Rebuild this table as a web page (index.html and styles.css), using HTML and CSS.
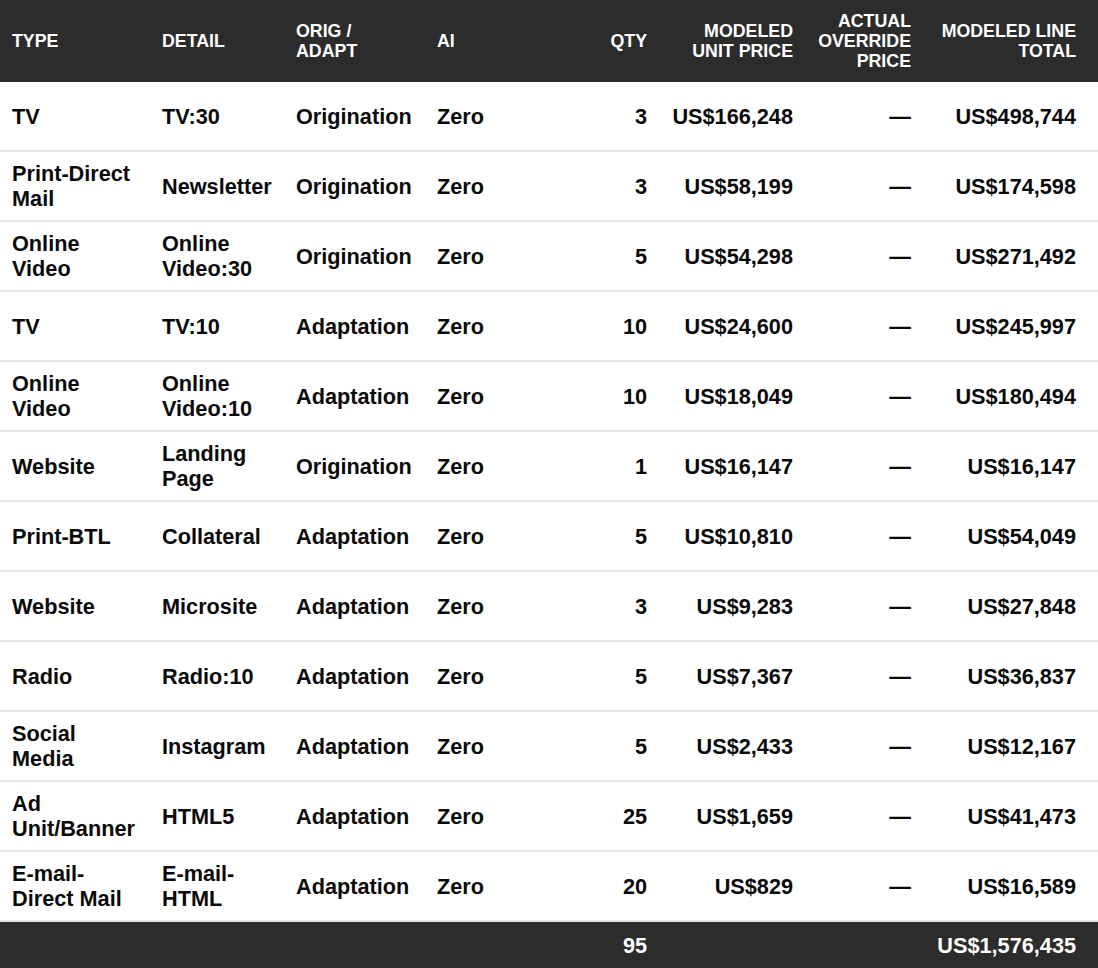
FILE: index.html
```html
<!DOCTYPE html>
<html lang="en">
<head>
<meta charset="utf-8">
<title>Line Items</title>
<link rel="stylesheet" href="styles.css">
</head>
<body>
<div class="sheet">
  <div class="row head">
    <div class="c">TYPE</div>
    <div class="c">DETAIL</div>
    <div class="c">ORIG / ADAPT</div>
    <div class="c">AI</div>
    <div class="c r">QTY</div>
    <div class="c r">MODELED UNIT PRICE</div>
    <div class="c r">ACTUAL OVERRIDE PRICE</div>
    <div class="c r last">MODELED LINE TOTAL</div>
  </div>

  <div class="row body"><div class="c">TV</div><div class="c">TV:30</div><div class="c">Origination</div><div class="c">Zero</div><div class="c r">3</div><div class="c r">US$166,248</div><div class="c r">—</div><div class="c r last">US$498,744</div></div>
  <div class="row body"><div class="c">Print-Direct Mail</div><div class="c">Newsletter</div><div class="c">Origination</div><div class="c">Zero</div><div class="c r">3</div><div class="c r">US$58,199</div><div class="c r">—</div><div class="c r last">US$174,598</div></div>
  <div class="row body"><div class="c">Online Video</div><div class="c">Online Video:30</div><div class="c">Origination</div><div class="c">Zero</div><div class="c r">5</div><div class="c r">US$54,298</div><div class="c r">—</div><div class="c r last">US$271,492</div></div>
  <div class="row body"><div class="c">TV</div><div class="c">TV:10</div><div class="c">Adaptation</div><div class="c">Zero</div><div class="c r">10</div><div class="c r">US$24,600</div><div class="c r">—</div><div class="c r last">US$245,997</div></div>
  <div class="row body"><div class="c">Online Video</div><div class="c">Online Video:10</div><div class="c">Adaptation</div><div class="c">Zero</div><div class="c r">10</div><div class="c r">US$18,049</div><div class="c r">—</div><div class="c r last">US$180,494</div></div>
  <div class="row body"><div class="c">Website</div><div class="c">Landing Page</div><div class="c">Origination</div><div class="c">Zero</div><div class="c r">1</div><div class="c r">US$16,147</div><div class="c r">—</div><div class="c r last">US$16,147</div></div>
  <div class="row body"><div class="c">Print-BTL</div><div class="c">Collateral</div><div class="c">Adaptation</div><div class="c">Zero</div><div class="c r">5</div><div class="c r">US$10,810</div><div class="c r">—</div><div class="c r last">US$54,049</div></div>
  <div class="row body"><div class="c">Website</div><div class="c">Microsite</div><div class="c">Adaptation</div><div class="c">Zero</div><div class="c r">3</div><div class="c r">US$9,283</div><div class="c r">—</div><div class="c r last">US$27,848</div></div>
  <div class="row body"><div class="c">Radio</div><div class="c">Radio:10</div><div class="c">Adaptation</div><div class="c">Zero</div><div class="c r">5</div><div class="c r">US$7,367</div><div class="c r">—</div><div class="c r last">US$36,837</div></div>
  <div class="row body"><div class="c">Social Media</div><div class="c">Instagram</div><div class="c">Adaptation</div><div class="c">Zero</div><div class="c r">5</div><div class="c r">US$2,433</div><div class="c r">—</div><div class="c r last">US$12,167</div></div>
  <div class="row body"><div class="c">Ad Unit/Banner</div><div class="c">HTML5</div><div class="c">Adaptation</div><div class="c">Zero</div><div class="c r">25</div><div class="c r">US$1,659</div><div class="c r">—</div><div class="c r last">US$41,473</div></div>
  <div class="row body"><div class="c">E-mail-Direct Mail</div><div class="c">E-mail-HTML</div><div class="c">Adaptation</div><div class="c">Zero</div><div class="c r">20</div><div class="c r">US$829</div><div class="c r">—</div><div class="c r last">US$16,589</div></div>

  <div class="row foot">
    <div class="c"></div><div class="c"></div><div class="c"></div><div class="c"></div>
    <div class="c r">95</div><div class="c"></div><div class="c"></div>
    <div class="c r last">US$1,576,435</div>
  </div>
</div>
</body>
</html>
```

FILE: styles.css
```css
html, body {
  margin: 0;
  padding: 0;
  background: #ffffff;
}

body {
  font-family: "Liberation Sans", Arial, sans-serif;
  font-weight: bold;
  color: #0a0a0a;
}

.sheet {
  width: 1098px;
}

.row {
  display: grid;
  grid-template-columns: 150px 134px 141px 125px 109px 146px 118px 1fr;
  align-items: center;
}

.c {
  padding: 0 12px;
  min-width: 0;
}

.r {
  text-align: right;
}

.last {
  padding-right: 22px;
}

.head {
  height: 82px;
  background: #2c2c2c;
  color: #ffffff;
  font-size: 17.8px;
  line-height: 20px;
}

.body {
  height: 68px;
  border-bottom: 2px solid #e4e4e4;
  font-size: 21.7px;
  line-height: 25px;
}

.foot {
  height: 47px;
  background: #2c2c2c;
  color: #ffffff;
  font-size: 21.7px;
  line-height: 25px;
}
```
